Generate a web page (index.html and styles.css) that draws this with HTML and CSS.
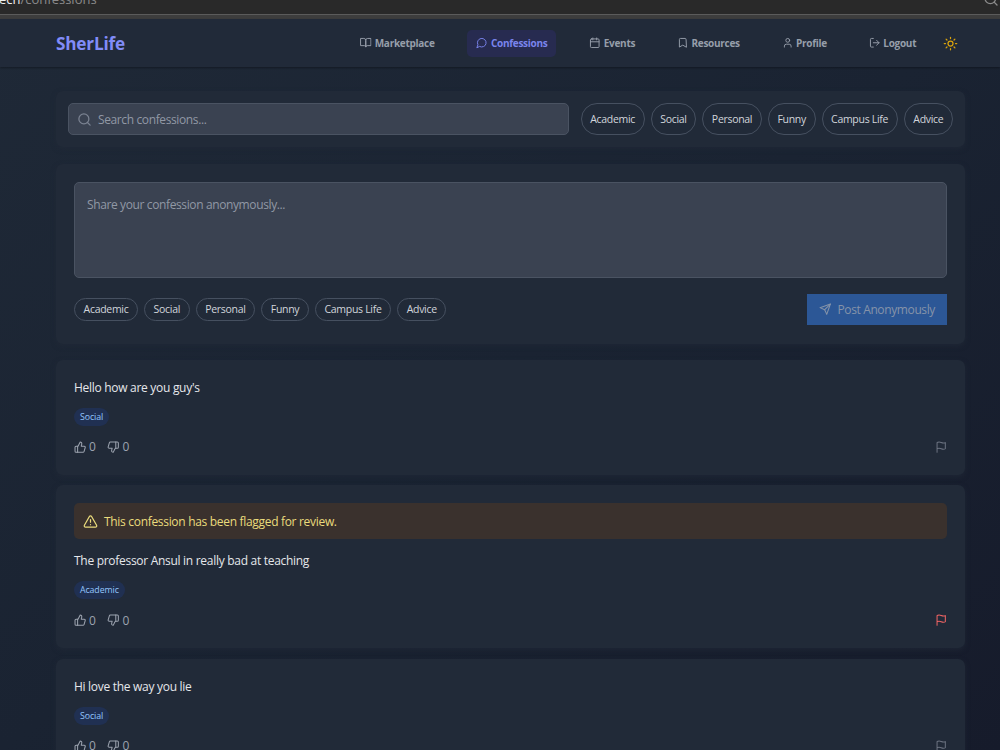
FILE: index.html
```html
<!DOCTYPE html>
<html lang="en">
<head>
  <meta charset="UTF-8" />
  <meta name="viewport" content="width=device-width, initial-scale=1.0"/>
  <title>SherLife - Confessions</title>
  <link rel="stylesheet" href="styles.css">
</head>
<body>

  <!-- Icons -->
  <svg class="sprite" xmlns="http://www.w3.org/2000/svg">
    <symbol id="book" viewBox="0 0 24 24"><path d="M2 3h6a4 4 0 0 1 4 4v14a3 3 0 0 0-3-3H2z"/><path d="M22 3h-6a4 4 0 0 0-4 4v14a3 3 0 0 1 3-3h7z"/></symbol>
    <symbol id="message" viewBox="0 0 24 24"><path d="M7.9 20A9 9 0 1 0 4 16.1L2 22Z"/></symbol>
    <symbol id="calendar" viewBox="0 0 24 24"><rect x="3" y="4" width="18" height="18" rx="2"/><path d="M16 2v4M8 2v4M3 10h18"/></symbol>
    <symbol id="bookmark" viewBox="0 0 24 24"><path d="m19 21-7-4-7 4V5a2 2 0 0 1 2-2h10a2 2 0 0 1 2 2z"/></symbol>
    <symbol id="user" viewBox="0 0 24 24"><path d="M19 21v-2a4 4 0 0 0-4-4H9a4 4 0 0 0-4 4v2"/><circle cx="12" cy="7" r="4"/></symbol>
    <symbol id="logout" viewBox="0 0 24 24"><path d="M9 21H5a2 2 0 0 1-2-2V5a2 2 0 0 1 2-2h4"/><path d="m16 17 5-5-5-5M21 12H9"/></symbol>
    <symbol id="sun" viewBox="0 0 24 24"><circle cx="12" cy="12" r="4"/><path d="M12 2v2M12 20v2M4.93 4.93l1.41 1.41M17.66 17.66l1.41 1.41M2 12h2M20 12h2M6.34 17.66l-1.41 1.41M19.07 4.93l-1.41 1.41"/></symbol>
    <symbol id="search" viewBox="0 0 24 24"><circle cx="11" cy="11" r="8"/><path d="m21 21-4.3-4.3"/></symbol>
    <symbol id="send" viewBox="0 0 24 24"><path d="m22 2-7 20-4-9-9-4Z"/><path d="M22 2 11 13"/></symbol>
    <symbol id="up" viewBox="0 0 24 24"><path d="M7 10v12"/><path d="M15 5.88 14 10h5.83a2 2 0 0 1 1.92 2.56l-2.33 8A2 2 0 0 1 17.5 22H4a2 2 0 0 1-2-2v-8a2 2 0 0 1 2-2h2.76a2 2 0 0 0 1.79-1.11L12 2a3.13 3.13 0 0 1 3 3.88Z"/></symbol>
    <symbol id="down" viewBox="0 0 24 24"><path d="M17 14V2"/><path d="M9 18.12 10 14H4.17a2 2 0 0 1-1.92-2.56l2.33-8A2 2 0 0 1 6.5 2H20a2 2 0 0 1 2 2v8a2 2 0 0 1-2 2h-2.76a2 2 0 0 0-1.79 1.11L12 22a3.13 3.13 0 0 1-3-3.88Z"/></symbol>
    <symbol id="flag" viewBox="0 0 24 24"><path d="M4 15s1-1 4-1 5 2 8 2 4-1 4-1V3s-1 1-4 1-5-2-8-2-4 1-4 1zM4 22v-7"/></symbol>
    <symbol id="alert" viewBox="0 0 24 24"><path d="m21.73 18-8-14a2 2 0 0 0-3.48 0l-8 14A2 2 0 0 0 4 21h16a2 2 0 0 0 1.73-3Z"/><path d="M12 9v4M12 17h.01"/></symbol>
  </svg>

  <!-- Address bar -->
  <div class="browser-bar">
    <p class="url"><span>ech</span>/confessions</p>
    <svg class="icon"><use href="#search"/></svg>
  </div>

  <!-- Navbar -->
  <nav class="navbar">
    <a class="logo" href="#">SherLife</a>
    <div class="nav-links">
      <a href="#"><svg class="icon"><use href="#book"/></svg>Marketplace</a>
      <a href="#" class="active"><svg class="icon"><use href="#message"/></svg>Confessions</a>
      <a href="#"><svg class="icon"><use href="#calendar"/></svg>Events</a>
      <a href="#"><svg class="icon"><use href="#bookmark"/></svg>Resources</a>
      <a href="#"><svg class="icon"><use href="#user"/></svg>Profile</a>
      <a href="#"><svg class="icon"><use href="#logout"/></svg>Logout</a>
      <svg class="icon theme-toggle"><use href="#sun"/></svg>
    </div>
  </nav>

  <main class="content">

    <!-- Search + filters -->
    <section class="card search-card">
      <div class="search-box">
        <svg class="icon"><use href="#search"/></svg>
        <input type="text" placeholder="Search confessions..." />
      </div>
      <div class="chips">
        <button class="chip">Academic</button>
        <button class="chip">Social</button>
        <button class="chip">Personal</button>
        <button class="chip">Funny</button>
        <button class="chip">Campus Life</button>
        <button class="chip">Advice</button>
      </div>
    </section>

    <!-- New confession -->
    <section class="card post-card">
      <textarea placeholder="Share your confession anonymously..."></textarea>
      <div class="post-row">
        <div class="chips">
          <button class="chip">Academic</button>
          <button class="chip">Social</button>
          <button class="chip">Personal</button>
          <button class="chip">Funny</button>
          <button class="chip">Campus Life</button>
          <button class="chip">Advice</button>
        </div>
        <button class="post-btn"><svg class="icon"><use href="#send"/></svg><span>Post Anonymously</span></button>
      </div>
    </section>

    <!-- Confessions -->
    <article class="card confession">
      <p class="text">Hello how are you guy's</p>
      <span class="tag">Social</span>
      <div class="actions">
        <span class="vote"><svg class="icon"><use href="#up"/></svg>0</span>
        <span class="vote"><svg class="icon"><use href="#down"/></svg>0</span>
        <svg class="icon flag"><use href="#flag"/></svg>
      </div>
    </article>

    <article class="card confession">
      <div class="warning"><svg class="icon"><use href="#alert"/></svg><span>This confession has been flagged for review.</span></div>
      <p class="text">The professor Ansul in really bad at teaching</p>
      <span class="tag">Academic</span>
      <div class="actions">
        <span class="vote"><svg class="icon"><use href="#up"/></svg>0</span>
        <span class="vote"><svg class="icon"><use href="#down"/></svg>0</span>
        <svg class="icon flag flagged"><use href="#flag"/></svg>
      </div>
    </article>

    <article class="card confession">
      <p class="text">Hi love the way you lie</p>
      <span class="tag">Social</span>
      <div class="actions">
        <span class="vote"><svg class="icon"><use href="#up"/></svg>0</span>
        <span class="vote"><svg class="icon"><use href="#down"/></svg>0</span>
        <svg class="icon flag"><use href="#flag"/></svg>
      </div>
    </article>

  </main>
</body>
</html>
```
FILE: styles.css
```css
* {
  box-sizing: border-box;
}

body, html {
  height: 100%;
  margin: 0;
  overflow: hidden;
}

body {
  font-family: "Open Sans", "Noto Sans", sans-serif;
  font-size: 12px;
  letter-spacing: -0.38px;
  color: #e5e7eb;
  background: linear-gradient(to bottom right, #1f2937, #1a2332 50%, #161b2b);
}

button, input, textarea {
  font: inherit;
  letter-spacing: inherit;
  color: inherit;
  margin: 0;
}

.sprite {
  display: none;
}

.icon {
  width: 12.4px;
  height: 12.4px;
  flex: none;
  fill: none;
  stroke: currentColor;
  stroke-width: 2;
  stroke-linecap: round;
  stroke-linejoin: round;
}

/* Address bar */
.browser-bar {
  height: 19px;
  display: flex;
  justify-content: space-between;
  background: linear-gradient(#292929 14px, #5b5b5b 14px, #5b5b5b 15px, #3d3d3d 15px);
  color: #8b8b8b;
  overflow: hidden;
}

.url {
  margin: -11px 0 0 -1px;
  font-size: 13px;
  line-height: 20px;
  letter-spacing: 0;
}

.url span {
  color: #f0f0f0;
}

.browser-bar .icon {
  width: 16px;
  height: 16px;
  margin: -9px 1px 0 0;
}

/* Navbar */
.navbar {
  height: 48px;
  padding: 0 42px 0 56px;
  display: flex;
  align-items: center;
  justify-content: space-between;
  background: #212a39;
  box-shadow: 0 1px 2px rgba(0, 0, 0, 0.35);
}

.logo {
  font-size: 17.2px;
  font-weight: 700;
  letter-spacing: -0.2px;
  color: #818cf8;
  text-decoration: none;
}

.nav-links {
  display: flex;
  align-items: center;
  gap: 23.8px;
}

.nav-links a {
  height: 27px;
  padding: 0 9px;
  display: flex;
  align-items: center;
  gap: 3px;
  border-radius: 5px;
  font-size: 10px;
  font-weight: 700;
  letter-spacing: -0.28px;
  color: #969eaa;
  text-decoration: none;
}

.nav-links a .icon {
  width: 11.5px;
  height: 11.5px;
}

.nav-links a.active {
  background: #272b50;
  color: #7a84ec;
}

.theme-toggle {
  width: 15px;
  height: 15px;
  margin-left: -6px;
  color: #d9a20c;
}

/* Cards */
.content {
  padding: 24px 35px 0 56px;
}

.card {
  background: #212a38;
  border-radius: 7px;
  box-shadow: 0 2px 5px rgba(33, 42, 56, 0.7);
}

.search-card {
  height: 56px;
  padding: 12px;
  display: flex;
  gap: 12px;
}

.search-box {
  flex: 1;
  padding: 0 8px;
  display: flex;
  align-items: center;
  gap: 6px;
  background: #3a4251;
  border: 1px solid #4a5362;
  border-radius: 5px;
}

.search-box .icon {
  width: 15px;
  height: 15px;
  color: #7b8392;
}

.search-box input {
  width: 100%;
  padding: 0;
  border: none;
  outline: none;
  background: none;
}

input::placeholder, textarea::placeholder {
  color: #9198a5;
  opacity: 1;
}

.chips {
  display: flex;
  gap: 6px;
}

.chip {
  padding: 0 8.6px 1px;
  border: 1px solid #465060;
  border-radius: 20px;
  background: none;
  color: #d1d5db;
  font-size: 10.5px;
  font-weight: 500;
  letter-spacing: -0.3px;
  white-space: nowrap;
}

.post-card {
  height: 180px;
  margin-top: 17px;
  padding: 18px;
}

textarea {
  display: block;
  width: 100%;
  height: 96px;
  padding: 13px 12px;
  background: #3a4251;
  border: 1px solid #4a5362;
  border-radius: 5px;
  outline: none;
  resize: none;
}

.post-row {
  margin-top: 16px;
  display: flex;
  align-items: center;
  justify-content: space-between;
}

.post-row .chip {
  height: 23px;
  padding-bottom: 2px;
}

.post-btn {
  width: 140px;
  height: 31px;
  padding: 0 12px;
  display: flex;
  align-items: center;
  justify-content: space-between;
  border: none;
  background: #2c5796;
  color: #8593a9;
  white-space: nowrap;
}

/* Confessions */
.confession {
  padding: 18px;
}

.post-card + .confession {
  margin-top: 16px;
}

.confession + .confession {
  margin-top: 10.5px;
}

.text {
  margin: 0 0 11px;
  line-height: 19px;
  font-weight: 500;
  letter-spacing: -0.29px;
  color: #e5e7eb;
}

.tag {
  display: block;
  width: fit-content;
  padding: 0 6px;
  border-radius: 9px;
  font-size: 8.8px;
  font-weight: 500;
  line-height: 18px;
  letter-spacing: -0.1px;
  background: #203052;
  color: #93c5fd;
}

.actions {
  height: 19px;
  margin: 11.3px 0 0.7px;
  display: flex;
  align-items: center;
  gap: 12px;
  color: #9ca3af;
}

.vote {
  display: flex;
  align-items: center;
  gap: 2.6px;
}

.flag {
  margin-left: auto;
  color: #6b7280;
}

.flagged {
  color: #f06464;
}

.warning {
  height: 36px;
  margin-bottom: 12px;
  padding: 0 9px;
  display: flex;
  align-items: center;
  gap: 6px;
  border-radius: 5px;
  background: #3a312d;
  color: #eadb7c;
  font-weight: 500;
  letter-spacing: -0.31px;
}

.warning .icon {
  width: 15px;
  height: 15px;
}
```
